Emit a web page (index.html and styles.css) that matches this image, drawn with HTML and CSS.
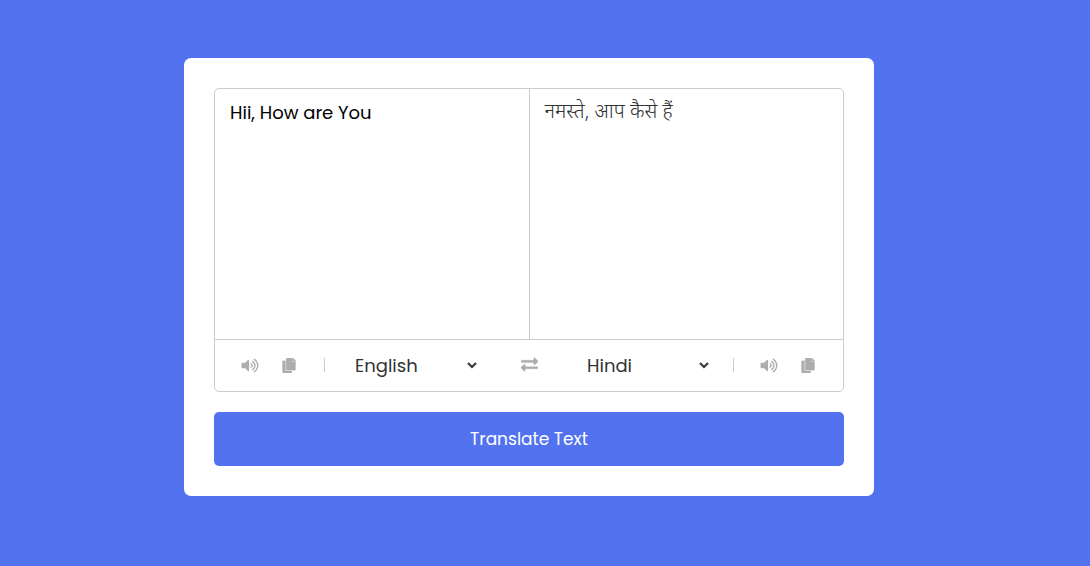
FILE: index.html
```html
<!DOCTYPE html>
<html lang="en">
<head>
<meta charset="utf-8">
<meta name="viewport" content="width=device-width, initial-scale=1">
<title>Language Translator</title>
<link rel="stylesheet" href="styles.css">
</head>
<body>
<svg class="sprite" aria-hidden="true">
  <symbol id="volume" viewBox="0 0 576 512"><path d="M215 71 126 160H24c-13.300 0-24 10.700-24 24v144c0 13.300 10.700 24 24 24h102l89 89c15 15 41 4.500 41-17V88c0-21.500-26-32-41-17zm233-46c-12-7-26-4-33 7s-4 26 7 33c66 42 106 113 106 191s-40 149-106 191c-11 7-14 21-7 33 6 10 20 15 33 7 80-50 128-137 128-231S528 75 448 25zm32 231c0-64-32-122-86-156-11-7-26-4-33 8-7 11-3 26 8 33 39 25 63 68 63 115s-24 90-63 115c-11 7-15 22-8 33 7 12 22 15 33 8 54-34 86-92 86-156zm-141-76c-11-7-26-3-33 9-6 12-2 26 10 33 12 6 20 20 20 34s-8 28-20 34c-12 7-16 21-10 33 7 12 22 16 33 9 28-15 45-44 45-76s-17-61-45-76z"/></symbol>
  <symbol id="copy" viewBox="0 0 448 512"><path d="M320 440v48c0 13-11 24-24 24H24c-13 0-24-11-24-24V120c0-13 11-24 24-24h80v296c0 31 21 48 48 48h168zm6-322V0H152c-13 0-24 11-24 24v368c0 13 11 24 24 24h272c13 0 24-11 24-24V128H344c-13 0-18-4-18-10zm115-45L375 7c-5-5-11-7-17-7h-16v112h106V90c0-6-2-13-7-17z"/></symbol>
  <symbol id="exchange" viewBox="0 0 512 512"><path d="M0 168v-16c0-13 11-24 24-24h360V80c0-21 26-32 41-17l80 80c9 9 9 25 0 34l-80 80c-15 15-41 4-41-17v-48H24c-13 0-24-11-24-24zm488 152H128v-48c0-21-26-32-41-17L7 335c-9 9-9 25 0 34l80 80c15 15 41 4 41-17v-48h360c13 0 24-11 24-24v-16c0-13-11-24-24-24z"/></symbol>
</svg>
<main class="container">
  <div class="wrapper">
    <div class="text-input">
      <textarea class="text from-text" aria-label="Enter text" spellcheck="false">Hii, How are You</textarea>
      <textarea class="text to-text" aria-label="Translation" lang="hi" spellcheck="false" readonly>नमस्ते, आप कैसे हैं</textarea>
    </div>
    <div class="controls">
      <div class="side from">
        <div class="icons">
          <button class="icon" type="button" aria-label="Listen to text"><svg class="volume"><use href="#volume"/></svg></button>
          <button class="icon" type="button" aria-label="Copy text"><svg class="copy"><use href="#copy"/></svg></button>
        </div>
        <select class="language" aria-label="Translate from"><option>English</option><option>Hindi</option></select>
      </div>
      <button class="icon swap" type="button" aria-label="Swap languages"><svg class="exchange"><use href="#exchange"/></svg></button>
      <div class="side to">
        <select class="language" aria-label="Translate to"><option>Hindi</option><option>English</option></select>
        <div class="icons">
          <button class="icon" type="button" aria-label="Listen to translation"><svg class="volume"><use href="#volume"/></svg></button>
          <button class="icon" type="button" aria-label="Copy translation"><svg class="copy"><use href="#copy"/></svg></button>
        </div>
      </div>
    </div>
  </div>
  <button class="translate" type="button">Translate Text</button>
</main>
</body>
</html>
```
FILE: styles.css
```css
* {
  box-sizing: border-box;
  margin: 0;
  padding: 0;
  font-family: Poppins, "Noto Sans", sans-serif;
}

body {
  display: flex;
  align-items: center;
  justify-content: center;
  min-height: 100vh;
  padding: 0 32px 12px 0;
  background: #5372f0;
}

.sprite {
  display: none;
}

.container {
  width: 100%;
  max-width: 690px;
  padding: 30px;
  background: #fff;
  border-radius: 7px;
  box-shadow: 0 10px 20px rgba(0, 0, 0, 0.01);
}

.wrapper {
  border: 1px solid #ccc;
  border-radius: 5px;
}

.text-input {
  display: flex;
  border-bottom: 1px solid #ccc;
}

.text {
  flex: 1;
  min-width: 0;
  height: 250px;
  padding: 10px 15px;
  border: none;
  outline: none;
  resize: none;
  background: none;
  color: #000;
  font-size: 18px;
  line-height: 27px;
}

.to-text {
  border-left: 1px solid #ccc;
  color: #333;
  font-family: "Nirmala UI", "Noto Sans Devanagari", "Noto Sans", sans-serif;
  font-size: 20px;
  font-weight: 300;
  line-height: 28px;
}

.controls {
  display: grid;
  grid-template-columns: 1fr auto 1fr;
  align-items: center;
  padding: 12px 25px;
}

.side {
  display: flex;
  align-items: center;
}

.to {
  justify-content: flex-end;
}

.icons {
  display: flex;
  align-items: center;
  gap: 1px;
  height: 14px;
  border: 0 solid #ccc;
}

.from .icons {
  margin: 0 26px 1px -9px;
  padding-right: 16px;
  border-right-width: 1px;
}

.to .icons {
  margin: 0 -9px 1px 21px;
  padding-left: 16px;
  border-left-width: 1px;
}

.icons .icon {
  width: 38px;
}

.icon {
  display: flex;
  align-items: center;
  justify-content: center;
  border: none;
  background: none;
  color: #adadad;
  cursor: pointer;
}

.swap {
  padding-bottom: 2px;
}

.icon svg {
  fill: currentColor;
}

.volume {
  width: 18px;
  height: 15px;
}

.copy {
  width: 14px;
  height: 15px;
  stroke: currentColor;
  stroke-width: 8px;
}

.exchange {
  width: 17px;
  height: 17px;
  stroke: currentColor;
  stroke-width: 10px;
}

.language {
  width: 129px;
  height: 27px;
  border: none;
  outline: none;
  background: none;
  color: #333;
  font-size: 18px;
}

.translate {
  width: 100%;
  margin-top: 20px;
  padding: 14px;
  border: none;
  border-radius: 5px;
  outline: none;
  background: #5372f0;
  color: #fff;
  font-size: 17px;
  line-height: 26px;
  cursor: pointer;
}
```
